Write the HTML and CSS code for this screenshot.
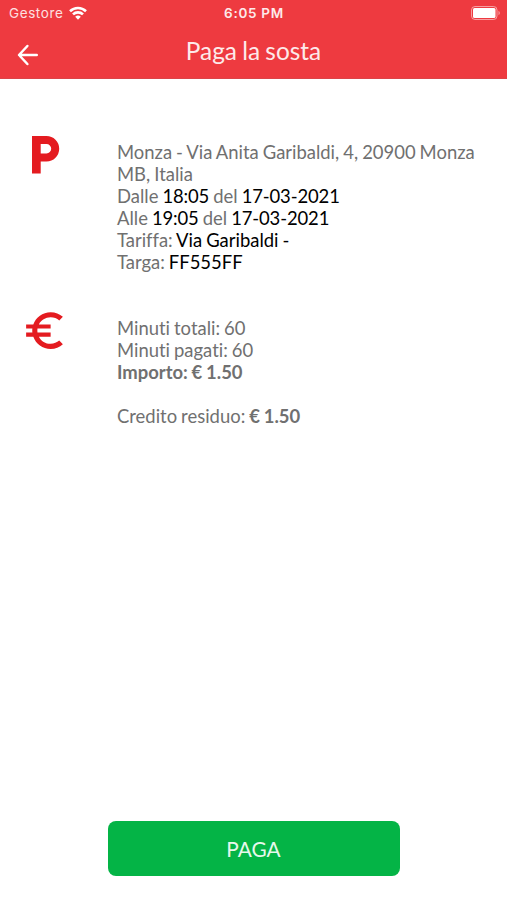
FILE: index.html
```html
<!DOCTYPE html>
<html lang="it">
<head>
    <meta charset="UTF-8">
    <meta name="viewport" content="width=device-width, initial-scale=1.0">
    <title>Paga la sosta</title>
    <link rel="stylesheet" href="styles.css">
</head>
<body>
    <header>
        <div class="status-bar">
            <div class="carrier">
                <span>Gestore</span>
                <svg width="18" height="14" viewBox="0 0 18 14" fill="none" stroke="#fff" stroke-width="2.6">
                    <path d="M1 5.2a11.5 11.5 0 0 1 16 0"/>
                    <path d="M4 8.4a7.2 7.2 0 0 1 10 0"/>
                    <path d="M9 13.8L6.2 10.8a4 4 0 0 1 5.6 0z" fill="#fff" stroke="none"/>
                </svg>
            </div>
            <div class="time">6:05 PM</div>
            <div class="battery">
                <svg width="30" height="14" viewBox="0 0 30 14">
                    <rect x="0.5" y="0.5" width="25.5" height="13" rx="3.5" fill="none" stroke="#fff" stroke-opacity="0.5"/>
                    <rect x="2" y="2" width="22.5" height="10" rx="1.5" fill="#fff"/>
                    <path d="M27.5 4.8c1.8.8 1.8 3.6 0 4.4z" fill="#fff" fill-opacity="0.5"/>
                </svg>
            </div>
        </div>
        <div class="nav-bar">
            <button class="back-btn" aria-label="Indietro">
                <svg width="30" height="30" viewBox="0 0 24 24" fill="none" stroke="#fff" stroke-width="2" stroke-linecap="round" stroke-linejoin="round">
                    <path d="M19 12H5M11.5 4.8L4.8 12l6.7 7.2"/>
                </svg>
            </button>
            <h1>Paga la sosta</h1>
        </div>
    </header>

    <main>
        <section class="parking">
            <div class="icon">
                <svg width="28" height="38" viewBox="0 0 28 38" fill="#e41b20" fill-rule="evenodd">
                    <path d="M0 0h14.5a12.7 12.7 0 0 1 0 25.4H8.7v12H0zM8.7 8v9.4h5.8a4.7 4.7 0 0 0 0-9.4z"/>
                </svg>
            </div>
            <div class="details">
                Monza - Via Anita Garibaldi, 4, 20900 Monza MB, Italia<br>
                Dalle <span class="value date">18:05</span> del <span class="value date">17-03-2021</span><br>
                Alle <span class="value date">19:05</span> del <span class="value date">17-03-2021</span><br>
                Tariffa: <span class="value">Via Garibaldi -</span><br>
                Targa: <span class="value">FF555FF</span>
            </div>
        </section>
        <section class="payment">
            <div class="icon">
                <svg width="49" height="49" viewBox="0 0 24 24" fill="#e41b20">
                    <path d="M15 18.5c-2.51 0-4.68-1.42-5.76-3.5H15v-2H8.58c-.05-.33-.08-.66-.08-1s.03-.67.08-1H15V9H9.24C10.32 6.92 12.5 5.5 15 5.5c1.61 0 3.09.59 4.23 1.57L21 5.3C19.41 3.87 17.3 3 15 3c-3.92 0-7.24 2.51-8.48 6H3v2h3.06c-.04.33-.06.66-.06 1s.02.67.06 1H3v2h3.52c1.24 3.49 4.56 6 8.48 6 2.31 0 4.41-.87 6-2.3l-1.78-1.77c-1.13.98-2.6 1.57-4.22 1.57z"/>
                </svg>
            </div>
            <div class="details">
                Minuti totali: 60<br>
                Minuti pagati: 60<br>
                <b>Importo: € 1.50</b><br>
                <br>
                Credito residuo: <b>€ 1.50</b>
            </div>
        </section>
    </main>

    <footer>
        <button class="pay-btn">PAGA</button>
    </footer>
</body>
</html>
```

FILE: styles.css
```css
* {
    box-sizing: border-box;
}
body {
    margin: 0;
    height: 900px;
    display: flex;
    flex-direction: column;
    font-family: Lato, sans-serif;
    font-variant-ligatures: none;
    background-color: #fff;
    color: #707070;
}
header {
    height: 79px;
    background-color: #ee3a40;
    border-bottom: 1px solid #dc4448;
    color: #fff;
}
.status-bar {
    height: 26px;
    padding: 0 6px 0 9px;
    display: grid;
    grid-template-columns: 1fr auto 1fr;
    align-items: center;
    font-family: Inter, sans-serif;
    font-size: 13.5px;
}
.carrier {
    display: flex;
    align-items: center;
    gap: 6px;
    letter-spacing: 0.6px;
    color: #fde0e1;
}
.time {
    padding-right: 2px;
    font-weight: 600;
    letter-spacing: 0.7px;
    color: #fdeaea;
}
.battery {
    display: flex;
    justify-content: flex-end;
}
.nav-bar {
    height: 52px;
    padding: 0 13px;
    display: grid;
    grid-template-columns: 30px 1fr 30px;
    align-items: center;
}
.back-btn {
    display: flex;
    padding: 0;
    margin-top: 6px;
    border: none;
    background: none;
}
h1 {
    margin: 0 0 3px;
    text-align: center;
    font-size: 24.4px;
    font-weight: 400;
    word-spacing: -1px;
    color: #fdeaea;
}
main {
    flex: 1;
    padding: 62px 30px 0 0;
}
section {
    display: grid;
    grid-template-columns: 117px 1fr;
}
.payment {
    margin-top: 44px;
}
.icon svg {
    display: block;
}
.parking .icon {
    padding-left: 32px;
    margin-top: -5px;
}
.payment .icon {
    padding-left: 20px;
    margin-top: -11px;
}
.details {
    font-size: 18.45px;
    line-height: 22px;
    word-spacing: -0.7px;
}
.value {
    color: #000;
}
.date {
    letter-spacing: -0.12px;
}
footer {
    padding-bottom: 24px;
    text-align: center;
}
.pay-btn {
    width: 292px;
    height: 55px;
    padding: 0 0 1px;
    border: none;
    border-radius: 8px;
    background-color: #04b446;
    color: #e6f8ec;
    font-family: Lato, sans-serif;
    font-size: 20.8px;
}
```
